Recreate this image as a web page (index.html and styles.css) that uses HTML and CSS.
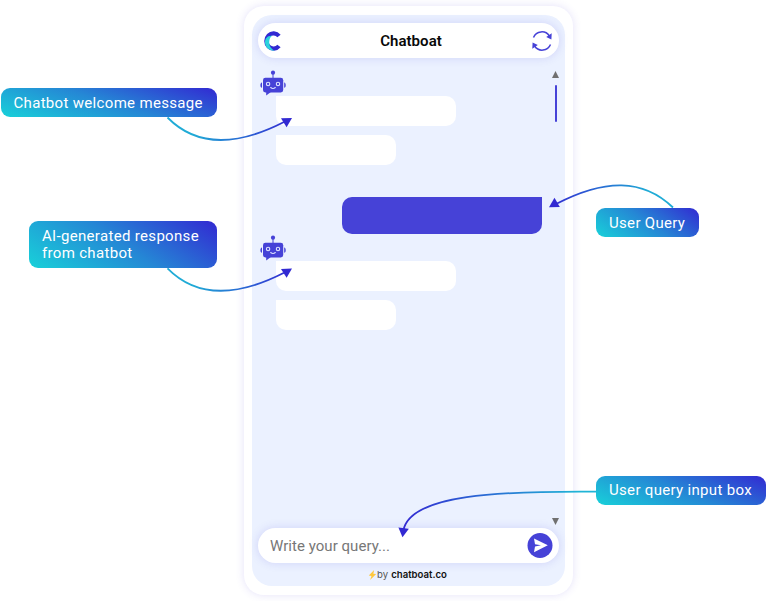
FILE: index.html
```
<!DOCTYPE html>
<html lang="en">
<head>
<meta charset="utf-8">
<title>Chatboat</title>
<link rel="stylesheet" href="styles.css">
</head>
<body>
<svg class="defs" width="0" height="0" aria-hidden="true">
  <symbol id="bot" viewBox="0 0 26 26">
    <g fill="#4642d7">
      <circle cx="13" cy="2.7" r="2.1"/>
      <path d="M12.5 4h1v4h-1z"/>
      <rect x="3" y="7.800" width="20.2" height="14.6" rx="2.4"/>
      <path d="M6.2 21h6l-6 4.6z"/>
      <path d="M2 12.5v5.3C.8 17.500.4 16.500.4 15.200S.8 12.800 2 12.500zM24.200 12.500v5.300c1.200-.3 1.500-1.300 1.500-2.600s-.3-2.400-1.500-2.700z"/>
    </g>
    <g fill="none" stroke="#dfe4ff" stroke-width="1.100">
      <circle cx="8.100" cy="14" r="1.700"/>
      <circle cx="18" cy="14" r="1.700"/>
      <path d="M10.700 17.500q2.300 2 4.600 0" stroke-linecap="round"/>
    </g>
  </symbol>
</svg>
<main class="stage">
  <section class="phone">
    <div class="screen">
      <header class="bar">
        <svg class="logo" viewBox="0 0 18 20">
          <path d="M15 5A7.200 7.700 0 1 0 15 15" fill="none" stroke="#3229d2" stroke-width="4.200"/>
          <path d="M8 4.800C3.500 4.500 1 7.500 1 11.200c0 4.800 4 8.600 9.500 8.500C7.400 18.200 5.200 15.500 5.200 11.600c0-3 .9-5.300 2.800-6.800z" fill="#2bd3dc"/>
        </svg>
        <h1 class="title">Chatboat</h1>
        <svg class="refresh" viewBox="0 0 20 20">
          <path d="M1.500 6.500A9 9 0 0 1 17.400 5M18.500 13.500A9 9 0 0 1 2.600 15" fill="none" stroke="#4642d7" stroke-width="1.500"/>
          <path d="M19.700 2.200l-.3 6.300-5.200-2.600zM.3 17.800l.3-6.300 5.200 2.600z" fill="#4642d7"/>
        </svg>
      </header>
      <div class="thread">
        <div class="messages">
          <div class="group">
            <svg class="bot"><use href="#bot"/></svg>
            <div class="bubble wide"></div>
            <div class="bubble"></div>
          </div>
          <div class="bubble user"></div>
          <div class="group">
            <svg class="bot"><use href="#bot"/></svg>
            <div class="bubble wide"></div>
            <div class="bubble"></div>
          </div>
        </div>
        <div class="scroll">
          <div><div class="up"></div><div class="thumb"></div></div>
          <div class="down"></div>
        </div>
      </div>
      <div class="composer">
        <span class="placeholder">Write your query...</span>
        <svg class="send" viewBox="0 0 26 26"><circle cx="13" cy="12.500" r="12.500" fill="#4642d7"/><path d="M7 5.500L20.800 12.300 7 19.200 8 13.400 14 12.300 8 11.200z" fill="#fff"/></svg>
      </div>
      <footer class="credit">
        <svg class="bolt" viewBox="0 0 8 10"><path d="M5.600 0L.3 5.500l2.700.4L1.600 10 7.700 4.100 4.900 3.700z" fill="#ffc83d"/></svg><span class="by">by</span><b class="brand">chatboat.co</b>
      </footer>
    </div>
  </section>

  <svg class="arrows" viewBox="0 0 767 601">
    <defs>
      <linearGradient id="g1" gradientUnits="userSpaceOnUse" x1="168" y1="0" x2="290" y2="0"><stop offset=".2" stop-color="#20abd6"/><stop offset="1" stop-color="#3229d2"/></linearGradient>
      <linearGradient id="g2" gradientUnits="userSpaceOnUse" x1="672" y1="0" x2="550" y2="0"><stop offset=".2" stop-color="#20abd6"/><stop offset="1" stop-color="#3229d2"/></linearGradient>
      <linearGradient id="g3" gradientUnits="userSpaceOnUse" x1="597" y1="0" x2="403" y2="0"><stop offset=".1" stop-color="#20b4d6"/><stop offset="1" stop-color="#3229d2"/></linearGradient>
    </defs>
    <g fill="none" stroke-width="1.800">
      <path d="M167.500 117.500C196 146.500 236 146.500 284 122" stroke="url(#g1)"/>
      <path d="M167.500 268.300C196 297.300 236 297.300 284 272.800" stroke="url(#g1)"/>
      <path d="M673 207.500C643 178.500 605 178.500 556 204" stroke="url(#g2)"/>
      <path d="M597 491.700C500 491 411 494 403.500 530" stroke="url(#g3)"/>
    </g>
    <g fill="#3229d2">
      <path d="M281 118.200l11-.2-5.400 9.200z"/>
      <path d="M281 268.900l11-.4-5.400 9.300z"/>
      <path d="M549 207.300l5.500-9.500 5.300 9.200z"/>
      <path d="M398.400 527.500l10.500 1.200-6.400 8.600z"/>
    </g>
  </svg>
  <div class="callout welcome">Chatbot welcome message</div>
  <div class="callout response">AI-generated response<br>from chatbot</div>
  <div class="callout query">User Query</div>
  <div class="callout input">User query input box</div>
</main>
</body>
</html>
```
FILE: styles.css
```
* { box-sizing: border-box; }
body { margin: 0; background: #fff; font-family: Roboto, "Liberation Sans", sans-serif; }
.defs { position: absolute; }
.stage { position: relative; width: 767px; height: 601px; padding: 6px 0 0 244px; overflow: hidden; }
.phone { width: 329px; height: 588.5px; padding: 8.5px 8px; border-radius: 20px; background: #fff; box-shadow: 0 0 9px rgba(90, 70, 215, .16); }
.screen { display: flex; flex-direction: column; height: 571px; padding: 8.500px 6px 0; border-radius: 20px; background: #ebf1ff; }
.bar, .composer { display: flex; align-items: center; justify-content: space-between; flex: none; width: 301px; height: 35px; border-radius: 18px; background: #fff; box-shadow: 0 0 10px rgba(70, 66, 215, .17); }
.bar { padding: 0 7px 0 6px; }
.logo { width: 18px; height: 20px; }
.title { margin: 1px 0 0 8px; font-size: 15px; line-height: 20px; font-weight: 600; letter-spacing: .05px; color: #080808; }
.refresh { width: 20px; height: 20px; }
.thread { display: flex; justify-content: space-between; flex: none; height: 470px; padding: 12px 0 3px 2px; }
.messages { display: flex; flex-direction: column; width: 282px; }
.group { display: flex; flex-direction: column; }
.bot { width: 26px; height: 26px; margin-bottom: -.5px; }
.bubble { width: 120px; height: 30px; margin-left: 16px; border-radius: 0 10px 10px 10px; background: #fff; }
.bubble.wide { width: 180px; margin-bottom: 9.300px; }
.bubble.user { align-self: flex-end; width: 200px; height: 37.500px; margin: 31.900px 0 1px; border-radius: 10px 0 10px 10px; background: #4642d7; }
.scroll { display: flex; flex-direction: column; justify-content: space-between; width: 7px; }
.up, .down { width: 7px; height: 7px; background: #707070; }
.up { margin-top: 1px; clip-path: polygon(50% 0, 100% 100%, 0 100%); }
.down { clip-path: polygon(0 0, 100% 0, 50% 100%); }
.thumb { width: 2px; height: 37px; margin: 7px auto 0; border-radius: 1px; background: #4642d7; }
.composer { padding: 0 6px 0 12px; }
.placeholder { font-size: 15px; line-height: 20px; letter-spacing: .04px; color: #777; }
.send { width: 26px; height: 26px; }
.credit { display: flex; align-items: center; justify-content: center; flex: none; height: 23px; padding-right: 2px; font-family: Inter, sans-serif; font-size: 9.600px; line-height: 12px; }
.bolt { width: 9px; height: 10px; margin-right: 0; }
.by { margin-right: 3px; color: #555; }
.brand { font-weight: 600; color: #111; }
.arrows { position: absolute; inset: 0; width: 767px; height: 601px; }
.callout { position: absolute; display: flex; align-items: center; height: 29px; padding: 2px 0 0 13px; border-radius: 9px; background: linear-gradient(18deg, #18d1d9, #2587d5 50%, #3229d2); color: #fff; font-size: 15px; line-height: 17.500px; letter-spacing: .32px; white-space: nowrap; }
.welcome { left: .5px; top: 88px; width: 216px; }
.response { left: 29px; top: 221px; width: 187.500px; height: 47px; padding-top: 1px; background-image: linear-gradient(34deg, #18d1d9, #2587d5 50%, #3229d2); }
.query { left: 596px; top: 208px; width: 103px; background-image: linear-gradient(36deg, #18d1d9, #2587d5 50%, #3229d2); }
.input { left: 596px; top: 475.500px; width: 169.500px; padding-top: 1px; background-image: linear-gradient(23deg, #18d1d9, #2587d5 50%, #3229d2); }
```
